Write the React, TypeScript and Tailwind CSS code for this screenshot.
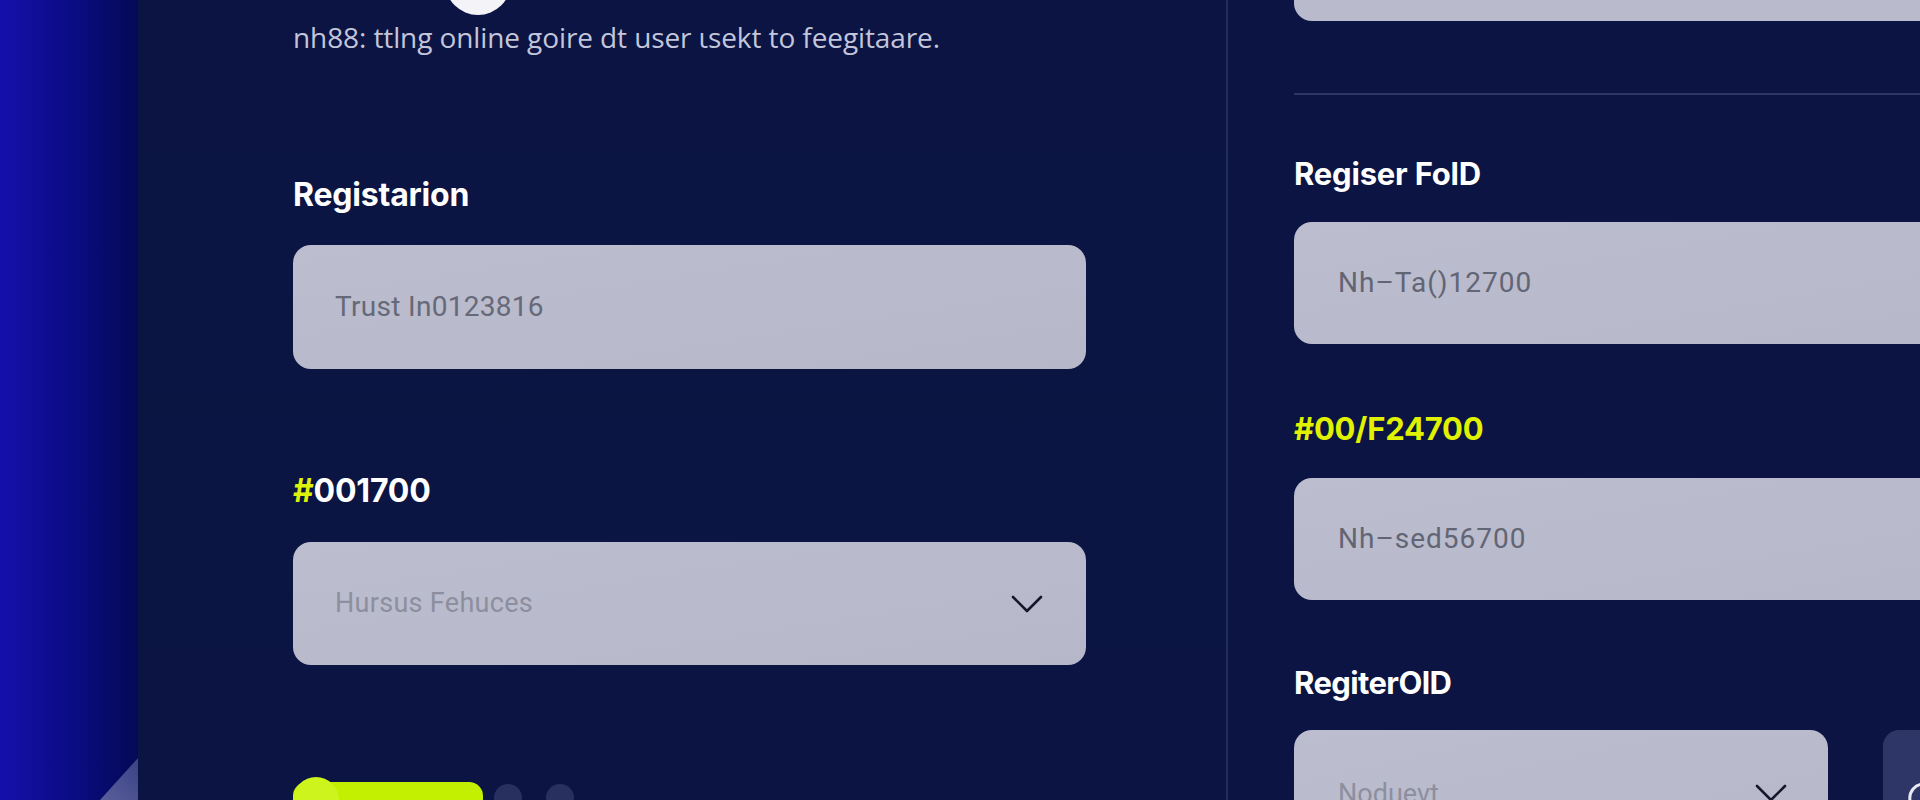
import React from "react";

const Chevron = ({ className = "" }: { className?: string }) => (
  <svg className={className} width="34" height="18" viewBox="0 0 34 18" fill="none">
    <polyline points="3,2 17,16 31,2" stroke="#16172a" strokeWidth="2.6" strokeLinecap="round" strokeLinejoin="round" />
  </svg>
);

const labelFont = { fontFamily: "Inter, 'Noto Sans', sans-serif" };
const inputFont = { fontFamily: "Roboto, 'Liberation Sans', sans-serif" };

export default function App() {
  return (
    <div className="flex h-[800px] w-[1920px] overflow-hidden bg-[#0b1442]">
      {/* left sidebar */}
      <aside className="relative h-full w-[138px] shrink-0 bg-gradient-to-r from-[#1510ab] via-[#0a0c86] to-[#050955]">
        <div className="absolute bottom-0 right-0 h-[42px] w-[38px] bg-gradient-to-tr from-[#5a5f9a] to-[#3b4286] [clip-path:polygon(100%_0,100%_100%,0_100%)]" />
      </aside>

      {/* left column */}
      <section className="relative h-full w-[1088px] shrink-0 bg-gradient-to-b from-[#0b1443] via-[#0b1542] to-[#0b1442] pl-[155px]">
        <div className="flex w-[793px] flex-col">
          <div className="ml-[152px] mt-[-51px] h-[66px] w-[66px] shrink-0 rounded-full bg-[#f4f4f8]" />
          <p
            className="mt-[6px] text-[28px] leading-[32px] tracking-[-0.1px] text-[#c3c6da]"
            style={{ fontFamily: "'Open Sans', 'Noto Sans', sans-serif" }}
          >
            nh88: ttlng online goire dt user ιsekt to feegitaare.
          </p>

          <h2 className="mt-[124px] text-[32px] font-bold leading-[36px] tracking-[-0.2px] text-white" style={labelFont}>
            Registarion
          </h2>
          <div className="mt-[32px] flex h-[124px] shrink-0 items-center rounded-[18px] bg-gradient-to-br from-[#bcbdcf] to-[#b6b7c9] pl-[42px]">
            <span className="text-[28px] tracking-[0.3px] text-[#666978]" style={inputFont}>
              Trust In0123816
            </span>
          </div>

          <h2 className="mt-[104px] text-[32px] font-bold leading-[36px] tracking-[-0.2px] text-white" style={labelFont}>
            <span className="text-[#dcf20a]">#</span>001700
          </h2>
          <div className="mt-[33px] flex h-[123px] shrink-0 items-center justify-between rounded-[18px] bg-gradient-to-br from-[#bcbdcf] to-[#b6b7c9] pl-[42px] pr-[42px]">
            <span className="text-[27px] tracking-[0.3px] text-[#8d8f9e]" style={inputFont}>
              Hursus Fehuces
            </span>
            <Chevron />
          </div>

          <div className="mt-[112px] flex shrink-0 items-start">
            <div className="relative h-[40px] w-[190px]">
              <div className="absolute bottom-0 left-0 top-[5px] w-full rounded-[14px] bg-[#c3ef00]" />
              <div className="absolute left-0 top-0 h-[46px] w-[46px] rounded-full bg-[#cdf41c]" />
            </div>
            <div className="ml-[11px] mt-[7px] h-[28px] w-[28px] rounded-full bg-[#27305f]" />
            <div className="ml-[24px] mt-[7px] h-[28px] w-[28px] rounded-full bg-[#27305f]" />
          </div>
        </div>
      </section>

      {/* divider */}
      <div className="h-full w-[2px] shrink-0 bg-[#222c5b]" />

      {/* right column */}
      <section className="flex h-full flex-1 flex-col pl-[66px]">
        <div className="mt-[-59px] h-[80px] w-[700px] shrink-0 rounded-[18px] bg-[#b9bacc]" />
        <div className="mt-[72px] h-[2px] w-full shrink-0 bg-[#2c3766]" />

        <h2 className="mt-[61px] shrink-0 text-[31px] font-bold leading-[36px] tracking-[-0.2px] text-white" style={labelFont}>
          Regiser FolD
        </h2>
        <div className="mt-[30px] flex h-[122px] w-[700px] shrink-0 items-center rounded-l-[18px] bg-gradient-to-br from-[#bcbdcf] to-[#b6b7c9] pl-[44px]">
          <span className="text-[28px] tracking-[1px] text-[#626574]" style={inputFont}>
            Nh–Ta()12700
          </span>
        </div>

        <h2 className="mt-[67px] shrink-0 text-[31px] font-bold leading-[36px] tracking-[-0.2px] text-[#e0f200]" style={labelFont}>
          #00/F24700
        </h2>
        <div className="mt-[31px] flex h-[122px] w-[700px] shrink-0 items-center rounded-l-[18px] bg-gradient-to-br from-[#bcbdcf] to-[#b6b7c9] pl-[44px]">
          <span className="text-[28px] tracking-[1px] text-[#626574]" style={inputFont}>
            Nh–sed56700
          </span>
        </div>

        <h2 className="mt-[65px] shrink-0 text-[31px] font-bold leading-[36px] tracking-[-0.6px] text-white" style={labelFont}>
          RegiterOlD
        </h2>
        <div className="mt-[29px] flex shrink-0 items-start">
          <div className="flex h-[122px] w-[534px] shrink-0 items-start justify-between rounded-[18px] bg-gradient-to-br from-[#bcbdcf] to-[#b6b7c9] pl-[44px] pr-[40px] pt-[44px]">
            <span className="text-[27px] text-[#8d8f9e]" style={inputFont}>
              Noduevt
            </span>
            <Chevron className="mt-[10px]" />
          </div>
          <div className="ml-[55px] flex h-[122px] w-[80px] shrink-0 items-start rounded-[16px] bg-[#2d3667] pl-[18px] pt-[48px]">
            <svg width="40" height="40" viewBox="0 0 40 40" fill="none">
              <path d="M30 8 A14 14 0 1 0 30 32" stroke="#e8e9f2" strokeWidth="3" strokeLinecap="round" />
            </svg>
          </div>
        </div>
      </section>
    </div>
  );
}
